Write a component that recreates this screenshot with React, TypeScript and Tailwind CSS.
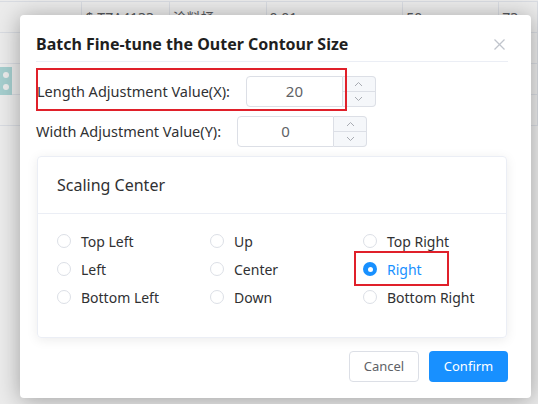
import { useState } from 'react';

const font = { fontFamily: '"Noto Sans", "Noto Sans CJK SC", sans-serif' };

const tableRows = [
  ['', '$-TZA4133', '涂料桶', '0.01', '50', '73'],
  ['', '', '', '', '', '37'],
  ['', '', '', '', '', '00'],
  ['', '', '', '', '', ''],
];

const options = [
  ['Top Left', 'Up', 'Top Right'],
  ['Left', 'Center', 'Right'],
  ['Bottom Left', 'Down', 'Bottom Right'],
];

const Chevron = ({ up }: { up?: boolean }) => (
  <svg width="9" height="6" viewBox="0 0 9 6" fill="none" stroke="#a8abb2" strokeWidth="1">
    {up ? <polyline points="1,5 4.5,1.5 8,5" /> : <polyline points="1,1 4.5,4.5 8,1" />}
  </svg>
);

const NumberInput = ({ value }: { value: string }) => (
  <div className="flex h-[31px]">
    <div className="w-[97px] border border-[#dcdfe6] rounded-l-[4px] flex items-center justify-center text-[15px] text-[#606266] bg-white">
      {value}
    </div>
    <div className="w-[33px] border border-l-0 border-[#dcdfe6] rounded-r-[4px] bg-[#f5f7fa] flex flex-col">
      <div className="flex-1 flex items-center justify-center border-b border-[#dcdfe6]">
        <Chevron up />
      </div>
      <div className="flex-1 flex items-center justify-center">
        <Chevron />
      </div>
    </div>
  </div>
);

const Radio = ({ label, checked, onClick }: { label: string; checked: boolean; onClick: () => void }) => (
  <div className="h-[28px] flex items-center gap-[10px] cursor-pointer" onClick={onClick}>
    {checked ? (
      <span className="w-[14px] h-[14px] rounded-full bg-[#1890ff] flex items-center justify-center">
        <span className="w-[5px] h-[5px] rounded-full bg-white"></span>
      </span>
    ) : (
      <span className="w-[14px] h-[14px] rounded-full border border-[#dcdfe6] bg-white"></span>
    )}
    <span className={`text-[14px] ${checked ? 'text-[#1890ff]' : 'text-[#303133]'}`}>{label}</span>
  </div>
);

export default function App() {
  const [selected, setSelected] = useState('Right');

  return (
    <div className="relative w-[538px] h-[404px] overflow-hidden bg-white" style={font}>
      {/* table behind the modal */}
      <div className="flex flex-col text-[14px] text-[#606266]">
        <div className="h-[2px] border-b border-[#ebeef5]"></div>
        {tableRows.map((row, i) => (
          <div key={i} className="flex h-[31px] border-b border-[#ebeef5]">
            {row.map((cell, j) => (
              <div
                key={j}
                className={`border-r border-[#ebeef5] pl-[3px] flex items-center relative ${
                  ['w-[85px]', 'w-[90px]', 'w-[100px]', 'w-[141px]', 'w-[99px]', 'w-[40px]'][j]
                } ${j === 5 && i === 1 ? 'text-[#e6a23c]' : ''} ${j === 5 && i === 2 ? 'text-[#409eff]' : ''}`}
              >
                {j === 0 && i === 2 ? (
                  <div className="absolute left-0 top-[3px] w-[12px] h-[28px] bg-[#b3e0e0] flex flex-col items-center justify-center gap-[6px]">
                    <span className="w-[6px] h-[6px] rounded-full bg-white"></span>
                    <span className="w-[6px] h-[6px] rounded-full bg-white"></span>
                  </div>
                ) : null}
                {cell}
              </div>
            ))}
          </div>
        ))}
      </div>

      {/* overlay */}
      <div className="absolute inset-0 bg-black/[0.08]"></div>

      {/* dialog */}
      <div className="absolute left-[20px] top-[15px] w-[511px] bg-white rounded-[4px] shadow-[0_2px_22px_rgba(0,0,0,0.32)] pl-[16px] pr-[23px] pb-[16px]">
        <div className="pt-[17px] pb-[5px] flex items-center justify-between border-b border-[#ebeef5]">
          <h2 className="text-[16px] font-bold leading-[24px] text-[#1f1f1f]">Batch Fine-tune the Outer Contour Size</h2>
          <svg width="11" height="11" viewBox="0 0 11 11" stroke="#c0c4cc" strokeWidth="1.2" className="mr-[3px]">
            <line x1="0.5" y1="0.5" x2="10.5" y2="10.5" />
            <line x1="10.5" y1="0.5" x2="0.5" y2="10.5" />
          </svg>
        </div>

        <div className="pt-[14px] flex flex-col gap-[9px] text-[14.5px] text-[#303133]">
          <div className="flex items-center gap-[16px]">
            <span className="pl-[1px]">Length Adjustment Value(X):</span>
            <NumberInput value="20" />
          </div>
          <div className="flex items-center gap-[16px]">
            <span>Width Adjustment Value(Y):</span>
            <NumberInput value="0" />
          </div>
        </div>

        <div className="mt-[9px] mx-[1px] border border-[#ebeef5] rounded-[4px] shadow-[0_2px_12px_rgba(0,0,0,0.08)]">
          <div className="h-[57px] px-[19px] flex items-center border-b border-[#ebeef5] text-[16px] text-[#303133]">
            Scaling Center
          </div>
          <div className="pt-[13px] pb-[26px] pl-[19px] flex flex-col">
            {options.map((row, i) => (
              <div key={i} className="grid grid-cols-[153px_153px_1fr]">
                {row.map((o) => (
                  <Radio key={o} label={o} checked={selected === o} onClick={() => setSelected(o)} />
                ))}
              </div>
            ))}
          </div>
        </div>

        <div className="mt-[13px] flex justify-end gap-[10px] text-[13px]">
          <button className="w-[70px] h-[31px] border border-[#dcdfe6] rounded-[4px] text-[#606266] bg-white">Cancel</button>
          <button className="w-[79px] h-[31px] rounded-[4px] bg-[#1890ff] text-white">Confirm</button>
        </div>

        {/* annotation boxes */}
        <div className="absolute left-[16px] top-[53px] w-[311px] h-[43px] border-2 border-[#e0202a] pointer-events-none"></div>
        <div className="absolute left-[334px] top-[236px] w-[95px] h-[35px] border-2 border-[#e0202a] pointer-events-none"></div>
      </div>
    </div>
  );
}
